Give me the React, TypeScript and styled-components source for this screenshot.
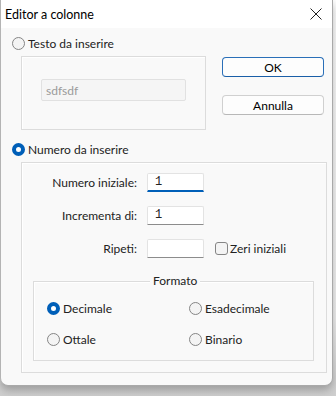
import React from "react";
import styled, { createGlobalStyle } from "styled-components";

const GlobalStyle = createGlobalStyle`
  html, body {
    margin: 0;
    padding: 0;
    background: #ffffff;
    font-family: Lato, "Noto Sans", sans-serif;
    font-size: 12px;
    color: #222222;
  }
`;

const Page = styled.div`
  width: 336px;
  height: 396px;
  overflow: hidden;
  background: linear-gradient(#ffffff 0%, #f2f2f2 80%, #cfcfcf 100%);
`;

const Window = styled.div`
  width: 333px;
  height: 386px;
  box-sizing: border-box;
  border: 1px solid #a9a9a9;
  border-top: none;
  border-left-color: #b4b4b4;
  border-radius: 0 0 8px 8px;
  background: #f9f9f9;
  display: flex;
  flex-direction: column;
  overflow: hidden;
  box-shadow: 0 4px 10px rgba(0, 0, 0, 0.28);
`;

const TitleBar = styled.div`
  height: 28px;
  flex: none;
  background: #ffffff;
  display: flex;
  align-items: center;
  justify-content: space-between;
  padding: 0 6px 0 4px;
  font-size: 12.5px;
  color: #000;
`;

const CloseIcon = styled.svg`
  width: 14px;
  height: 14px;
  margin-right: 3px;
`;

const Body = styled.div`
  flex: 1;
  padding: 7px 0 0 11px;
  display: flex;
  flex-direction: column;
`;

const TopRow = styled.div`
  display: flex;
`;

const LeftCol = styled.div`
  display: flex;
  flex-direction: column;
`;

const RightCol = styled.div`
  display: flex;
  flex-direction: column;
  gap: 18px;
  margin-left: 16px;
  padding-top: 22px;
`;

const RadioRow = styled.label<{ $mt?: number }>`
  display: flex;
  align-items: center;
  gap: 3px;
  height: 16px;
  margin-top: ${({ $mt }) => $mt ?? 0}px;
  white-space: nowrap;
`;

const RadioDot = styled.span<{ $checked?: boolean }>`
  width: 13px;
  height: 13px;
  box-sizing: border-box;
  border-radius: 50%;
  flex: none;
  background: ${({ $checked }) => ($checked ? "#ffffff" : "#f4f4f4")};
  border: ${({ $checked }) =>
    $checked ? "4px solid #005fb8" : "1px solid #858585"};
`;

const Group = styled.div<{ $w: number; $h: number }>`
  position: relative;
  width: ${({ $w }) => $w}px;
  height: ${({ $h }) => $h}px;
  box-sizing: border-box;
  border: 1px solid #dcdcdc;
  box-shadow: inset 1px 1px 0 #ffffff;
  margin: 5px 0 0 9px;
`;

const DisabledInput = styled.div`
  width: 145px;
  height: 22px;
  box-sizing: border-box;
  margin: 22px 0 0 19px;
  border: 1px solid #e1e1e1;
  border-radius: 2px;
  background: #f5f5f5;
  color: #9a9a9a;
  padding: 3px 0 0 4px;
`;

const Button = styled.button<{ $default?: boolean }>`
  width: 102px;
  height: 20px;
  box-sizing: border-box;
  background: #fdfdfd;
  border: 1px solid ${({ $default }) => ($default ? "#2a6fb8" : "#d0d0d0")};
  border-bottom-color: ${({ $default }) => ($default ? "#1a5fa8" : "#b8b8b8")};
  border-radius: 4px;
  font-family: inherit;
  font-size: 12px;
  color: #000;
  padding: 0;
`;

const FormGrid = styled.div`
  display: grid;
  grid-template-columns: 115px 57px auto;
  column-gap: 10px;
  row-gap: 14px;
  margin: 10px 0 0 0;
  align-items: center;
`;

const FieldLabel = styled.span`
  text-align: right;
`;

const TextBox = styled.div<{ $focused?: boolean }>`
  width: 57px;
  height: 19px;
  box-sizing: border-box;
  background: #ffffff;
  border: 1px solid #e3e3e3;
  border-bottom: ${({ $focused }) =>
    $focused ? "2px solid #005fb8" : "1px solid #8c8c8c"};
  border-radius: 2px 2px 0 0;
  font-family: "Liberation Mono", "DejaVu Sans Mono", monospace;
  font-size: 12px;
  padding: 1px 0 0 7px;
`;

const CheckRow = styled.label`
  display: flex;
  align-items: center;
  gap: 2px;
  margin-left: 1px;
`;

const CheckBox = styled.span`
  width: 13px;
  height: 13px;
  box-sizing: border-box;
  border: 1px solid #858585;
  border-radius: 3px;
  background: #f4f4f4;
`;

const FormatBox = styled.div`
  position: relative;
  box-sizing: border-box;
  margin: 23px 12px 0 11px;
  height: 80px;
  border: 1px solid #dcdcdc;
  box-shadow: inset 1px 1px 0 #ffffff;
  display: grid;
  grid-template-columns: 142px auto;
  row-gap: 15px;
  padding: 18px 0 0 13px;
  align-content: start;
`;

const Legend = styled.span`
  position: absolute;
  top: -9px;
  left: 116px;
  padding: 0 3px;
  background: #f9f9f9;
`;

export default function App() {
  return (
    <Page>
      <GlobalStyle />
      <Window>
        <TitleBar>
          <span>Editor a colonne</span>
          <CloseIcon viewBox="0 0 14 14">
            <path d="M1.5 1.5 L12.5 12.5 M12.5 1.5 L1.5 12.5" stroke="#222" strokeWidth="1" />
          </CloseIcon>
        </TitleBar>
        <Body>
          <TopRow>
            <LeftCol>
              <RadioRow>
                <RadioDot />
                Testo da inserire
              </RadioRow>
              <Group $w={185} $h={74}>
                <DisabledInput>sdfsdf</DisabledInput>
              </Group>
            </LeftCol>
            <RightCol>
              <Button $default>OK</Button>
              <Button>Annulla</Button>
            </RightCol>
          </TopRow>
          <RadioRow $mt={11}>
            <RadioDot $checked />
            Numero da inserire
          </RadioRow>
          <Group $w={306} $h={211}>
            <FormGrid>
              <FieldLabel>Numero iniziale:</FieldLabel>
              <TextBox $focused>1</TextBox>
              <span />
              <FieldLabel>Incrementa di:</FieldLabel>
              <TextBox>1</TextBox>
              <span />
              <FieldLabel>Ripeti:</FieldLabel>
              <TextBox />
              <CheckRow>
                <CheckBox />
                Zeri iniziali
              </CheckRow>
            </FormGrid>
            <FormatBox>
              <Legend>Formato</Legend>
              <RadioRow>
                <RadioDot $checked />
                Decimale
              </RadioRow>
              <RadioRow>
                <RadioDot />
                Esadecimale
              </RadioRow>
              <RadioRow>
                <RadioDot />
                Ottale
              </RadioRow>
              <RadioRow>
                <RadioDot />
                Binario
              </RadioRow>
            </FormatBox>
          </Group>
        </Body>
      </Window>
    </Page>
  );
}
